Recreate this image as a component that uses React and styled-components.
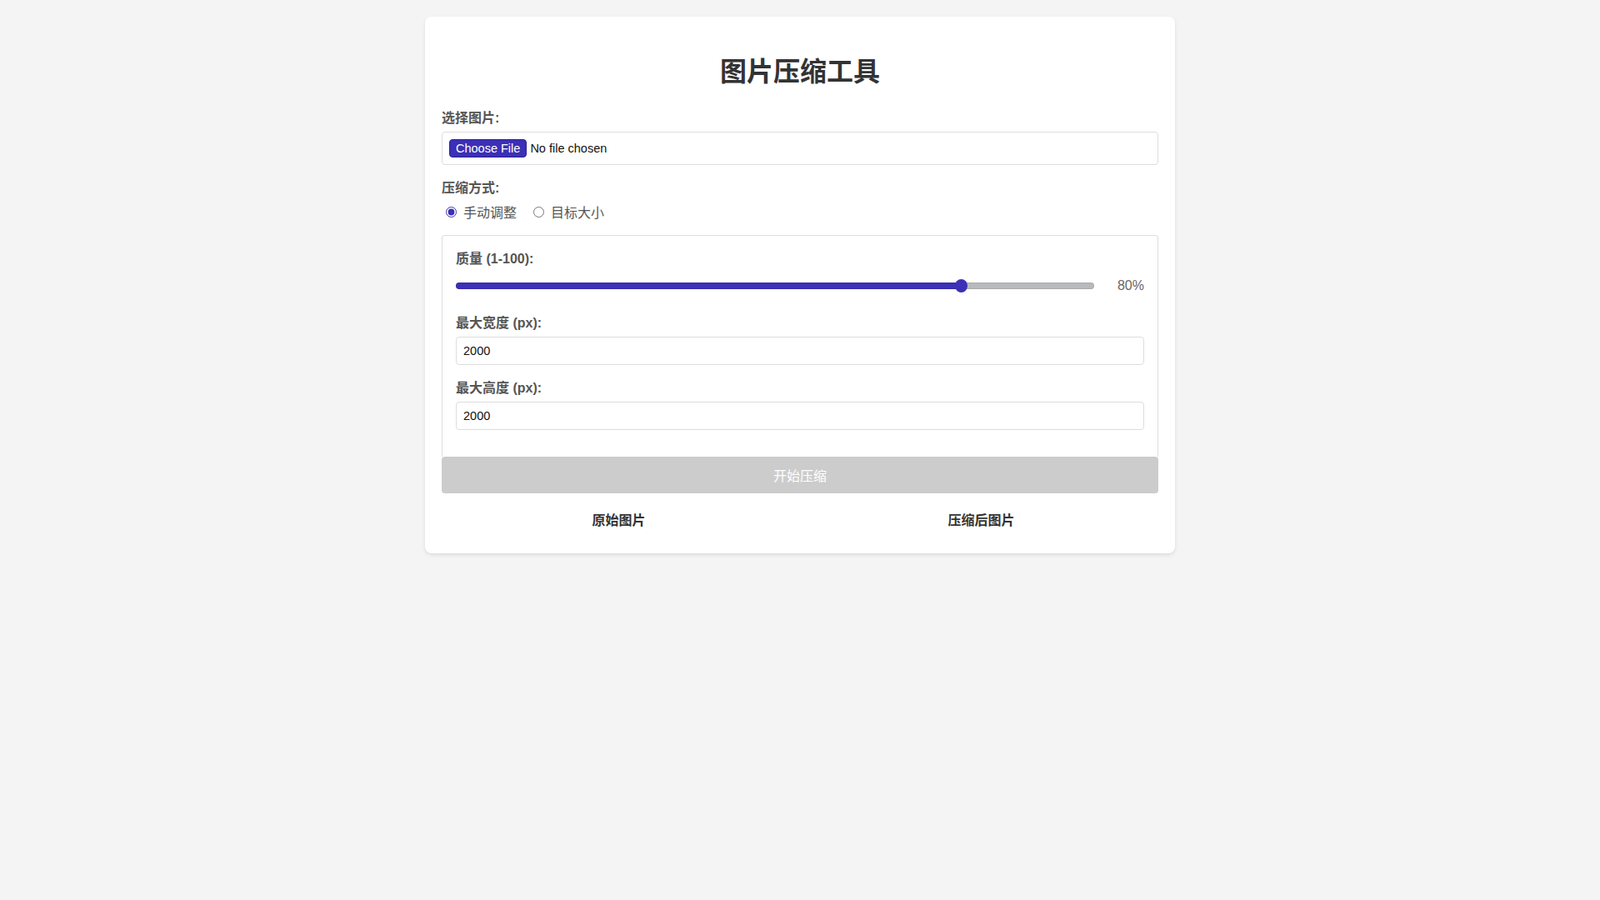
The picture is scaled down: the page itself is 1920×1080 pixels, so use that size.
import React, { useState } from 'react';
import styled, { createGlobalStyle } from 'styled-components';

const accent = '#3b30b6';

const GlobalStyle = createGlobalStyle`
  body {
    margin: 0;
    background-color: #f4f4f4;
    font-family: "Liberation Sans", Arial, "Noto Sans CJK SC", sans-serif;
  }
`

const App = () => {
  let [mode, setMode] = useState('manual');
  let [quality, setQuality] = useState(80);
  let [maxWidth, setMaxWidth] = useState(2000);
  let [maxHeight, setMaxHeight] = useState(2000);

  return (
    <>
      <GlobalStyle />
      <Card>
        <Title>图片压缩工具</Title>

        <Group $gap="18px">
          <Label>选择图片:</Label>
          <FileInput type="file" accept="image/*" />
        </Group>

        <Group $gap="18px">
          <Label $mb="8px">压缩方式:</Label>
          <RadioRow>
            <RadioLabel>
              <Radio
                type="radio"
                name="mode"
                checked={mode === 'manual'}
                onChange={() => setMode('manual')}
              />
              手动调整
            </RadioLabel>
            <RadioLabel>
              <Radio
                type="radio"
                name="mode"
                checked={mode === 'target'}
                onChange={() => setMode('target')}
              />
              目标大小
            </RadioLabel>
          </RadioRow>
        </Group>

        <Panel>
          <Group $gap="23px">
            <PanelLabel $mb="10px">质量 (1-100):</PanelLabel>
            <SliderRow>
              <Slider
                type="range"
                min="1"
                max="100"
                value={quality}
                onChange={e => setQuality(e.target.value)}
                style={{ '--fill': `${((quality - 1) / 99) * 100}%` }}
              />
              <SliderValue>{quality}%</SliderValue>
            </SliderRow>
          </Group>
          <Group $gap="16px">
            <PanelLabel>最大宽度 (px):</PanelLabel>
            <NumberInput
              type="number"
              value={maxWidth}
              onChange={e => setMaxWidth(e.target.value)}
            />
          </Group>
          <Group $gap="16px">
            <PanelLabel>最大高度 (px):</PanelLabel>
            <NumberInput
              type="number"
              value={maxHeight}
              onChange={e => setMaxHeight(e.target.value)}
            />
          </Group>
        </Panel>

        <CompressButton disabled>开始压缩</CompressButton>

        <PreviewGrid>
          <PreviewBox>
            <PreviewTitle>原始图片</PreviewTitle>
          </PreviewBox>
          <PreviewBox>
            <PreviewTitle>压缩后图片</PreviewTitle>
          </PreviewBox>
        </PreviewGrid>
      </Card>
    </>
  )
}

export default App;

const Card = styled.div`
  box-sizing: border-box;
  max-width: 900px;
  margin: 20px auto;
  padding: 20px;
  background-color: white;
  border-radius: 8px;
  box-shadow: 0 2px 4px rgba(0, 0, 0, 0.1);
`

const Title = styled.h1`
  margin: 26px 0 26px 0;
  font-size: 32px;
  line-height: 40px;
  text-align: center;
  color: #333;
`

const Group = styled.div`
  margin-bottom: ${props => props.$gap || '16px'};
`

const Label = styled.label`
  display: block;
  margin-bottom: ${props => props.$mb || '6px'};
  font-size: 16px;
  line-height: 20px;
  font-weight: bold;
  color: #555;
`

const PanelLabel = styled(Label)`
  line-height: 24px;
  margin-bottom: ${props => props.$mb || '4px'};
`

const FileInput = styled.input`
  box-sizing: border-box;
  display: block;
  width: 100%;
  padding: 8px;
  border: 1px solid #ddd;
  border-radius: 4px;
  font-family: "Liberation Sans", Arial, sans-serif;
  font-size: 14.5px;
  color: #111;

  &::file-selector-button {
    height: 22px;
    margin-right: 4px;
    padding: 0 7px;
    background-color: ${accent};
    color: white;
    border: 1px solid #2a2290;
    border-radius: 4px;
    font-family: "Liberation Sans", Arial, sans-serif;
    font-size: 14.5px;
  }
`

const RadioRow = styled.div`
  display: flex;
  align-items: center;
  height: 20px;
`

const RadioLabel = styled.label`
  display: inline-flex;
  align-items: center;
  margin-right: 15px;
  font-size: 16px;
  color: #555;
`

const Radio = styled.input`
  width: 13px;
  height: 13px;
  margin: 0 8px 0 5px;
  accent-color: ${accent};
`

const Panel = styled.div`
  padding: 16px 16px 16px 16px;
  border: 1px solid #ddd;
  border-bottom: none;
  border-radius: 4px 4px 0 0;
`

const SliderRow = styled.div`
  display: flex;
  align-items: center;
  gap: 10px;
  height: 20px;
`

const Slider = styled.input`
  flex: 1;
  margin: 0;
  height: 8px;
  -webkit-appearance: none;
  appearance: none;
  border-radius: 4px;
  background: linear-gradient(to right, ${accent} var(--fill), #b7babd var(--fill));
  box-shadow: inset 0 0 0 1px rgba(0, 0, 0, 0.08);
  outline: none;

  &::-webkit-slider-thumb {
    -webkit-appearance: none;
    width: 15px;
    height: 16px;
    border-radius: 50%;
    background: ${accent};
    cursor: pointer;
  }
`

const SliderValue = styled.span`
  min-width: 50px;
  text-align: right;
  font-size: 16px;
  color: #666;
`

const NumberInput = styled.input`
  box-sizing: border-box;
  display: block;
  width: 100%;
  height: 34px;
  padding: 8px;
  border: 1px solid #ddd;
  border-radius: 4px;
  font-family: "Liberation Sans", Arial, sans-serif;
  font-size: 14.5px;
  color: #111;
`

const CompressButton = styled.button`
  display: block;
  width: 100%;
  height: 44px;
  padding: 0;
  border: none;
  border-radius: 4px;
  background-color: #ccc;
  color: white;
  font-family: "Liberation Sans", Arial, "Noto Sans CJK SC", sans-serif;
  font-size: 16px;
  cursor: not-allowed;
`

const PreviewGrid = styled.div`
  display: grid;
  grid-template-columns: 1fr 1fr;
  gap: 10px;
  margin-top: 22px;
`

const PreviewBox = styled.div`
  text-align: center;
`

const PreviewTitle = styled.h3`
  margin: 0 0 8px 0;
  font-size: 16px;
  line-height: 22px;
  color: #333;
`
